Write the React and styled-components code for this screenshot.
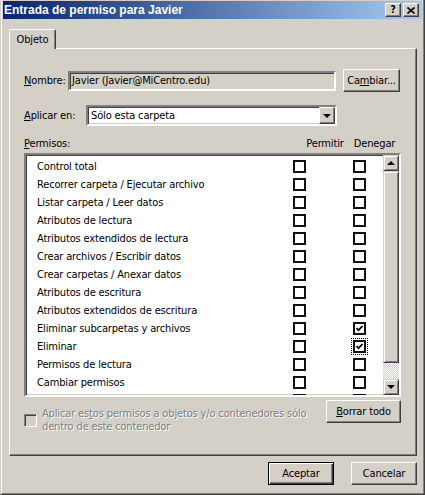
import React from "react";
import styled, { createGlobalStyle, css } from "styled-components";

const GlobalStyle = createGlobalStyle`
  html, body {
    margin: 0;
    padding: 0;
    background: #d4d0c8;
  }
  * {
    box-sizing: border-box;
  }
`;

const FONT = `Tahoma, "DejaVu Sans Condensed", "Liberation Sans", sans-serif`;

const raised = css`
  background: #d4d0c8;
  border: 1px solid;
  border-color: #fff #404040 #404040 #fff;
  box-shadow: inset -1px -1px #808080;
`;

const sunken = css`
  border: 2px solid;
  border-color: #808080 #fff #fff #808080;
  box-shadow: inset 1px 1px #404040, inset -1px -1px #d4d0c8;
`;

const Window = styled.div`
  width: 425px;
  height: 495px;
  display: flex;
  flex-direction: column;
  background: #d4d0c8;
  border-left: 1px solid #d4d0c8;
  border-right: 1px solid #404040;
  border-bottom: 1px solid #404040;
  font-family: ${FONT};
  font-size: 11px;
  letter-spacing: -0.15px;
  color: #000;
`;

const Frame = styled.div`
  flex: 1;
  display: flex;
  flex-direction: column;
  border-left: 1px solid #fff;
  border-right: 1px solid #808080;
  border-bottom: 1px solid #808080;
  padding: 1px 1px 7px 1px;
`;

const TitleBar = styled.div`
  height: 18px;
  display: flex;
  align-items: center;
  padding: 0 3px 0 1px;
  background: linear-gradient(to right, #0a246a, #a6caf0);
  color: #fff;
  font-family: "Liberation Sans", Arial, sans-serif;
  font-weight: bold;
  font-size: 12px;
  letter-spacing: 0;
`;

const TitleText = styled.span`
  flex: 1;
  white-space: nowrap;
`;

const CaptionButton = styled.button`
  ${raised};
  width: 16px;
  height: 14px;
  padding: 0;
  margin-left: ${(p) => (p.$gap ? "2px" : "0")};
  display: flex;
  align-items: center;
  justify-content: center;
  font-family: ${FONT};
  font-weight: bold;
  font-size: 10px;
  line-height: 1;
  color: #000;
`;

const TabStrip = styled.div`
  display: flex;
  margin: 10px 0 0 6px;
  height: 20px;
  position: relative;
  z-index: 1;
`;

const Tab = styled.div`
  width: 47px;
  height: 20px;
  background: #d4d0c8;
  border-top: 1px solid #fff;
  border-left: 1px solid #fff;
  border-right: 1px solid #404040;
  box-shadow: inset -1px 0 #808080;
  border-radius: 2px 2px 0 0;
  display: flex;
  align-items: center;
  justify-content: center;
  padding-bottom: 1px;
`;

const Panel = styled.div`
  margin: -1px 5px 0 6px;
  height: 408px;
  border: 1px solid;
  border-color: #fff #404040 #404040 #fff;
  box-shadow: inset -1px -1px #808080;
  padding: 20px 15px 0 14px;
  display: flex;
  flex-direction: column;
`;

const FieldRow = styled.div`
  display: flex;
  align-items: center;
  height: ${(p) => p.$h}px;
  margin-top: ${(p) => p.$mt || 0}px;
`;

const Label = styled.span`
  width: ${(p) => p.$w}px;
  flex-shrink: 0;
  white-space: nowrap;
`;

const ReadOnlyBox = styled.div`
  ${sunken};
  width: 268px;
  height: 20px;
  background: #d4d0c8;
  display: flex;
  align-items: center;
  padding-left: 2px;
  white-space: nowrap;
`;

const Button = styled.button`
  ${raised};
  width: ${(p) => p.$w}px;
  height: 23px;
  margin-left: ${(p) => p.$ml || 0}px;
  padding: 0;
  font-family: ${FONT};
  font-size: 11px;
  letter-spacing: -0.15px;
  white-space: nowrap;
  color: #000;
  ${(p) =>
    p.$default &&
    css`
      border: 1px solid #000;
      box-shadow: inset 1px 1px #fff, inset -1px -1px #404040,
        inset -2px -2px #808080;
    `}
`;

const Select = styled.div`
  ${sunken};
  width: 251px;
  height: 21px;
  background: #fff;
  display: flex;
  align-items: center;
  padding: 0 0 0 3px;
`;

const SelectText = styled.span`
  flex: 1;
  white-space: nowrap;
`;

const SelectButton = styled.div`
  ${raised};
  width: 16px;
  height: 17px;
  display: flex;
  align-items: center;
  justify-content: center;
`;

const Arrow = styled.span`
  width: 0;
  height: 0;
  border-left: 4px solid transparent;
  border-right: 4px solid transparent;
  ${(p) =>
    p.$up
      ? css`
          border-bottom: 4px solid #000;
        `
      : css`
          border-top: 4px solid #000;
        `}
`;

const Header = styled.div`
  display: grid;
  grid-template-columns: 1fr 46px 53px;
  margin-top: 11px;
  height: 13px;
  line-height: 13px;
  span + span {
    text-align: center;
  }
`;

const ListBox = styled.div`
  ${sunken};
  margin-top: 3px;
  height: 244px;
  background: #fff;
  display: flex;
  overflow: hidden;
`;

const Rows = styled.div`
  flex: 1;
  padding-top: 2px;
  overflow: hidden;
`;

const Row = styled.div`
  display: flex;
  align-items: center;
  height: 18px;
  padding: 0 17px 0 11px;
`;

const RowText = styled.span`
  flex: 1;
  white-space: nowrap;
`;

const CheckCell = styled.span`
  width: 13px;
  height: 13px;
  margin-left: ${(p) => p.$ml || 0}px;
  position: relative;
  display: flex;
`;

const Box = styled.span`
  width: 13px;
  height: 13px;
  border: 2px solid #111;
  background: #fff;
  display: flex;
  align-items: center;
  justify-content: center;
`;

const Focus = styled.span`
  position: absolute;
  left: -2px;
  top: -2px;
  right: -2px;
  bottom: -2px;
  border: 1px dotted #000;
`;

const ScrollBar = styled.div`
  width: 16px;
  display: flex;
  flex-direction: column;
`;

const ScrollButton = styled.div`
  ${raised};
  border-color: #d4d0c8 #404040 #404040 #d4d0c8;
  box-shadow: inset 1px 1px #fff, inset -1px -1px #808080;
  height: 16px;
  display: flex;
  align-items: center;
  justify-content: center;
`;

const Thumb = styled.div`
  ${raised};
  border-color: #d4d0c8 #404040 #404040 #d4d0c8;
  box-shadow: inset 1px 1px #fff, inset -1px -1px #808080;
  height: 192px;
`;

const Track = styled.div`
  flex: 1;
  background-color: #fff;
  background-image: repeating-conic-gradient(#d4d0c8 0 25%, #fff 0 50%);
  background-size: 2px 2px;
`;

const BottomRow = styled.div`
  display: flex;
  align-items: flex-start;
  margin-top: 3px;
`;

const Inherit = styled.div`
  flex: 1;
  display: flex;
  align-items: center;
  padding-top: 7px;
`;

const DisabledBox = styled.span`
  width: 13px;
  height: 13px;
  flex-shrink: 0;
  border: 1px solid;
  border-color: #808080 #fff #fff #808080;
  box-shadow: inset 1px 1px #404040, inset -1px -1px #d4d0c8;
  background: #d4d0c8;
`;

const DisabledText = styled.span`
  margin-left: 5px;
  line-height: 13px;
  color: #808080;
  text-shadow: 1px 1px 0 #fff;
`;

const Footer = styled.div`
  display: flex;
  justify-content: flex-end;
  margin: 6px 5px 0 0;
`;

const Check = () => (
  <svg width="7" height="7" viewBox="0 0 7 7">
    <polyline
      points="0.5,3 2.5,5.2 6.5,1"
      fill="none"
      stroke="#000"
      strokeWidth="1.7"
    />
  </svg>
);

const permissions = [
  ["Control total"],
  ["Recorrer carpeta / Ejecutar archivo"],
  ["Listar carpeta / Leer datos"],
  ["Atributos de lectura"],
  ["Atributos extendidos de lectura"],
  ["Crear archivos / Escribir datos"],
  ["Crear carpetas / Anexar datos"],
  ["Atributos de escritura"],
  ["Atributos extendidos de escritura"],
  ["Eliminar subcarpetas y archivos", true],
  ["Eliminar", true, true],
  ["Permisos de lectura"],
  ["Cambiar permisos"],
  ["Tomar posesión"],
];

export default function App() {
  return (
    <>
      <GlobalStyle />
      <Window>
        <Frame>
          <TitleBar>
            <TitleText>Entrada de permiso para Javier</TitleText>
            <CaptionButton>?</CaptionButton>
            <CaptionButton $gap>
              <svg width="8" height="7" viewBox="0 0 8 7">
                <path d="M0.5 0.5 L7.5 6.5 M7.5 0.5 L0.5 6.5" stroke="#000" strokeWidth="1.6" />
              </svg>
            </CaptionButton>
          </TitleBar>

          <TabStrip>
            <Tab>Objeto</Tab>
          </TabStrip>

          <Panel>
            <FieldRow $h={23}>
              <Label $w={44}>
                <u>N</u>ombre:
              </Label>
              <ReadOnlyBox>Javier (Javier@MiCentro.edu)</ReadOnlyBox>
              <Button $w={57} $ml={7}>
                Ca<u>m</u>biar...
              </Button>
            </FieldRow>

            <FieldRow $h={21} $mt={13}>
              <Label $w={62}>
                <u>A</u>plicar en:
              </Label>
              <Select>
                <SelectText>Sólo esta carpeta</SelectText>
                <SelectButton>
                  <Arrow />
                </SelectButton>
              </Select>
            </FieldRow>

            <Header>
              <span>
                <u>P</u>ermisos:
              </span>
              <span>Permitir</span>
              <span>Denegar</span>
            </Header>

            <ListBox>
              <Rows>
                {permissions.map(([name, deny, focus]) => (
                  <Row key={name}>
                    <RowText>{name}</RowText>
                    <CheckCell>
                      <Box />
                    </CheckCell>
                    <CheckCell $ml={47}>
                      <Box>{deny && <Check />}</Box>
                      {focus && <Focus />}
                    </CheckCell>
                  </Row>
                ))}
              </Rows>
              <ScrollBar>
                <ScrollButton>
                  <Arrow $up />
                </ScrollButton>
                <Thumb />
                <Track />
                <ScrollButton>
                  <Arrow />
                </ScrollButton>
              </ScrollBar>
            </ListBox>

            <BottomRow>
              <Inherit>
                <DisabledBox />
                <DisabledText>
                  Aplicar es<u>t</u>os permisos a objetos y/o contenedores sólo
                  <br />
                  dentro de este contenedor
                </DisabledText>
              </Inherit>
              <Button $w={75}>
                <u>B</u>orrar todo
              </Button>
            </BottomRow>
          </Panel>

          <Footer>
            <Button $w={66} $default>
              Aceptar
            </Button>
            <Button $w={66} $ml={17}>
              Cancelar
            </Button>
          </Footer>
        </Frame>
      </Window>
    </>
  );
}
